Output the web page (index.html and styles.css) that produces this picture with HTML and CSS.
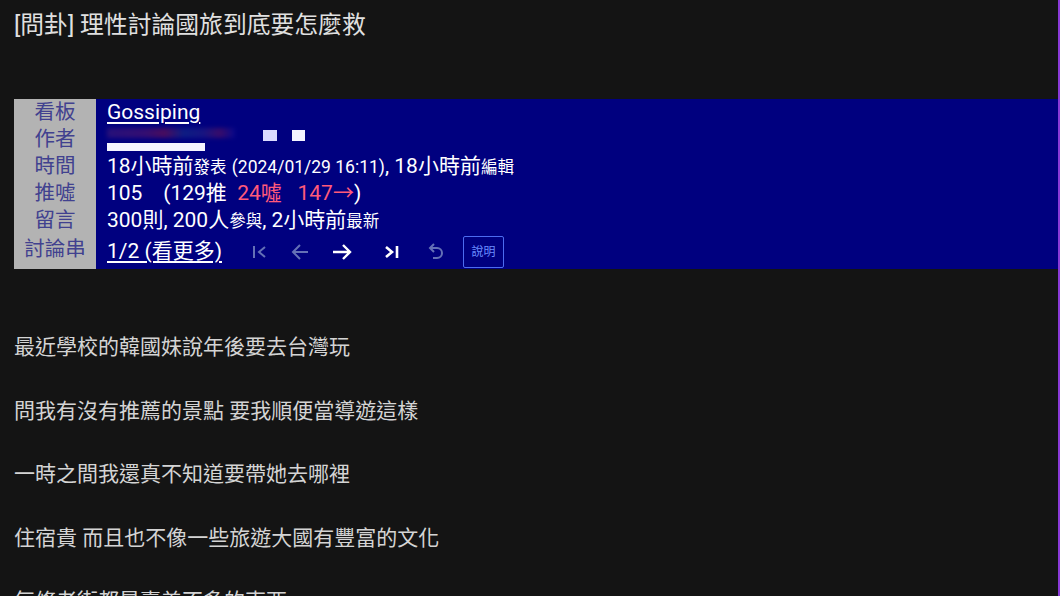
FILE: index.html
```html
<!DOCTYPE html>
<html lang="zh-Hant">
<head>
<meta charset="utf-8">
<title>[問卦] 理性討論國旅到底要怎麼救</title>
<link rel="stylesheet" href="styles.css">
</head>
<body>
<div class="page">
  <h1 class="title">[問卦] 理性討論國旅到底要怎麼救</h1>

  <div class="meta">
    <div class="label r1">看板</div>
    <div class="value r1"><span class="link">Gossiping</span></div>

    <div class="label r2">作者</div>
    <div class="value r2 author">
      <div class="author-left">
        <div class="blur"></div>
        <div class="bar"></div>
      </div>
      <div class="squares"><span class="sq"></span><span class="sq"></span></div>
    </div>

    <div class="label r3">時間</div>
    <div class="value r3">18小時前<small>發表</small> <span class="date">(2024/01/29 16:11)</span>, 18小時前<small>編輯</small></div>

    <div class="label r4">推噓</div>
    <div class="value r4">105 &nbsp;&nbsp; (129推 &nbsp;<span class="red">24噓 &nbsp;&nbsp;147→</span>)</div>

    <div class="label r5">留言</div>
    <div class="value r5">300則, 200人<small>參與</small>, 2小時前<small>最新</small></div>

    <div class="label r6">討論串</div>
    <div class="value r6 nav">
      <span class="link">1/2 (看更多)</span>
      <div class="icons">
        <svg class="ic dim" width="18" height="18" viewBox="0 0 18 18"><path d="M3 3v12M14 4l-6 5 6 5" fill="none" stroke="currentColor" stroke-width="2"/></svg>
        <svg class="ic dim" width="20" height="18" viewBox="0 0 20 18"><path d="M18 9H3M10 2L3 9l7 7" fill="none" stroke="currentColor" stroke-width="2"/></svg>
        <svg class="ic" width="22" height="18" viewBox="0 0 22 18"><path d="M2 9h17M12 2l7 7-7 7" fill="none" stroke="currentColor" stroke-width="2.4"/></svg>
        <svg class="ic" width="18" height="18" viewBox="0 0 18 18"><path d="M3 4l6 5-6 5" fill="none" stroke="currentColor" stroke-width="2.6"/><path d="M14 3v12" stroke="currentColor" stroke-width="2.6"/></svg>
        <svg class="ic dim" width="18" height="20" viewBox="0 0 18 20"><path d="M7 2L3 6l4 4M3 6h7a5 5 0 0 1 0 10H6" fill="none" stroke="currentColor" stroke-width="2"/></svg>
      </div>
      <span class="help">說明</span>
    </div>
  </div>

  <div class="content">
    <p>最近學校的韓國妹說年後要去台灣玩</p>
    <p>問我有沒有推薦的景點 要我順便當導遊這樣</p>
    <p>一時之間我還真不知道要帶她去哪裡</p>
    <p>住宿貴 而且也不像一些旅遊大國有豐富的文化</p>
    <p>每條老街都是賣差不多的東西</p>
  </div>
</div>
<div class="edge"></div>
</body>
</html>
```

FILE: styles.css
```css
html, body {
  margin: 0;
  padding: 0;
  background: #141414;
  height: 100%;
  overflow: hidden;
}
body {
  font-family: Roboto, "Noto Sans CJK TC", "Noto Sans", sans-serif;
  color: #d6d6d6;
}
.page {
  padding: 0 2px 0 14px;
}
.title {
  margin: 0;
  padding-top: 10px;
  font-size: 23.8px;
  line-height: 30px;
  font-weight: 400;
  color: #e0e0e0;
}
.meta {
  margin-top: 59px;
  display: grid;
  grid-template-columns: 82px 1fr;
  grid-template-rows: 27px 27px 27px 27px 27px 35px;
}
.label {
  background: #b3b3b3;
  color: #41418f;
  font-size: 20.5px;
  text-align: center;
  line-height: 27px;
}
.value {
  background: #00007f;
  color: #ffffff;
  font-size: 21px;
  line-height: 27px;
  padding-left: 11px;
  white-space: nowrap;
}
.label.r6 { line-height: 31px; }
.value small {
  font-size: 16.5px;
}
.date { font-size: 17.5px; }
.link {
  text-decoration: underline;
  text-underline-offset: 3px;
  text-decoration-thickness: 1.5px;
}
.red { color: #ff5a7a; }
.author {
  display: flex;
  align-items: flex-start;
  gap: 28px;
}
.author-left {
  display: flex;
  flex-direction: column;
  gap: 5px;
  padding-top: 2px;
}
.blur {
  width: 128px;
  height: 10px;
  background: linear-gradient(90deg, #26107a 0%, #340e72 30%, #480c5e 45%, #0c1c84 60%, #161482 75%, #380c6a 88%, #08088a 100%);
  filter: blur(2px);
}
.bar {
  width: 98px;
  height: 8px;
  background: #f4f4ff;
}
.squares {
  display: flex;
  gap: 15px;
  padding-top: 4px;
}
.sq {
  width: 14px;
  height: 11px;
  background: #dcdcff;
}
.sq + .sq { background: #f4f4ff; width: 13px; }
.nav {
  display: flex;
  align-items: center;
  line-height: 31px;
}
.icons {
  display: flex;
  align-items: center;
  gap: 21px;
  margin-left: 29px;
  color: #ffffff;
}
.ic { display: block; }
.ic.dim { color: #6470b6; }
.icons .ic:nth-child(4) { margin-left: 9px; }
.icons .ic:nth-child(5) { margin-left: 5px; }
.help {
  margin-left: 18px;
  width: 39px;
  height: 30px;
  border: 1px solid #4c6cf0;
  border-radius: 2px;
  color: #6a8cff;
  font-size: 12px;
  line-height: 30px;
  text-align: center;
}
.content {
  margin-top: 47px;
}
.content p {
  margin: 0;
  font-size: 21px;
  line-height: 63.6px;
  color: #d4d4d4;
}
.edge {
  position: fixed;
  top: 0;
  right: 0;
  width: 2px;
  height: 100%;
  background: #8a3ad8;
}
```
